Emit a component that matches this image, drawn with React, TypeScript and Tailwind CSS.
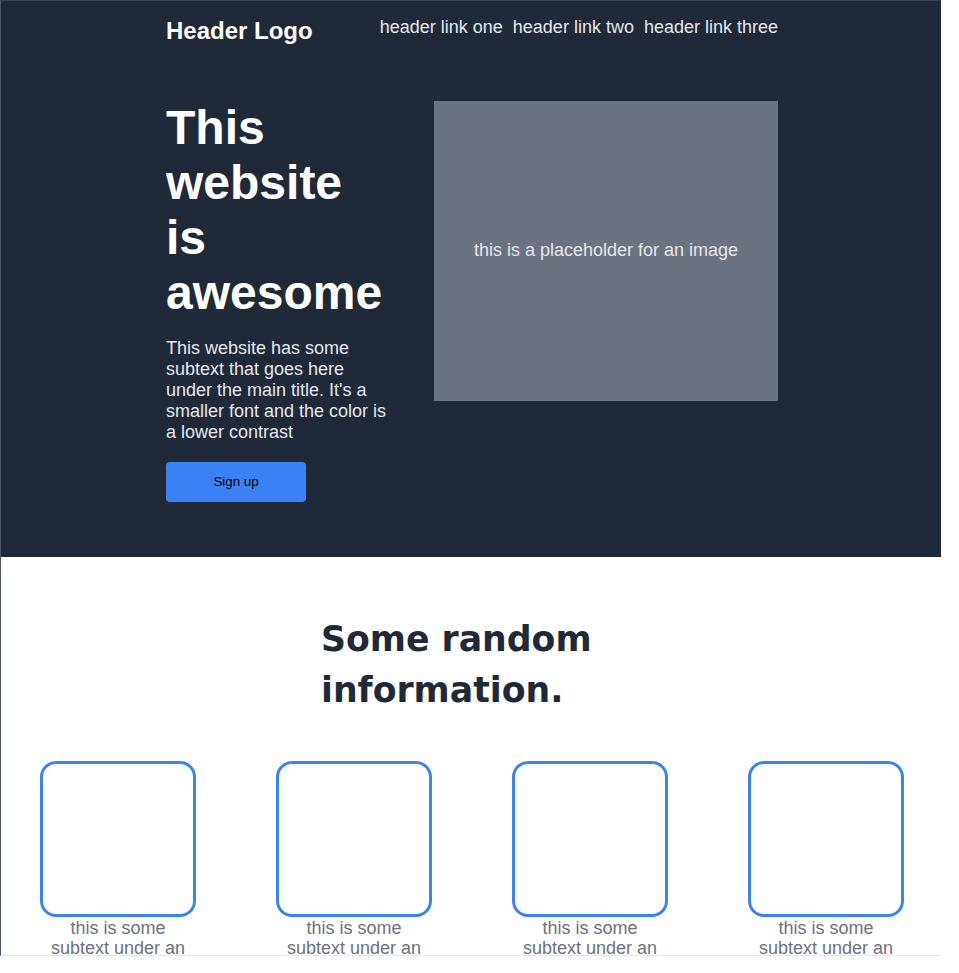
const cards = [1, 2, 3, 4];

const App = () => {
    return (
        <div className="min-h-screen bg-white" style={{ fontFamily: '"Liberation Sans", Arial, sans-serif' }}>
            <div className="w-[941px] h-[956px] overflow-hidden border-l border-t border-b border-l-[#4b5563] border-t-[#374151] border-b-[#e5e7eb] leading-[1.15]">
                {/* Hero */}
                <div className="bg-[#1f2937] pb-[55px]">
                    <div className="w-[612px] ml-[165px]">
                        <header className="flex items-start justify-between pt-4">
                            <div className="text-[24px] font-bold text-white">Header Logo</div>
                            <nav className="flex gap-[10px] text-[18px] text-[#e5e7eb]">
                                <a>header link one</a>
                                <a>header link two</a>
                                <a>header link three</a>
                            </nav>
                        </header>

                        <div className="flex items-start justify-between mt-[55px]">
                            <div className="w-[222px]">
                                <h1 className="text-[48px] font-bold text-white leading-[55px]">
                                    This website is awesome
                                </h1>
                                <p className="mt-[18px] text-[18px] leading-[21px] text-[#e5e7eb]">
                                    This website has some subtext that goes here under the main title. It's a smaller font and the color is a lower contrast
                                </p>
                                <button className="mt-[19px] w-[140px] h-[40px] rounded bg-[#3b82f6] text-[13.333px] text-black">
                                    Sign up
                                </button>
                            </div>
                            <div className="w-[344px] h-[300px] mt-px bg-[#6b7280] flex items-center justify-center text-[18px] text-[#e5e7eb]">
                                this is a placeholder for an image
                            </div>
                        </div>
                    </div>
                </div>

                {/* Information */}
                <div className="pt-[57px]">
                    <h2
                        className="w-[300px] mx-auto text-[34.7px] font-bold text-[#1f2937] leading-[51px]"
                        style={{ fontFamily: '"DejaVu Sans", sans-serif' }}>
                        Some random information.
                    </h2>
                    <div className="flex gap-[80px] pl-[39px] mt-[45px]">
                        {cards.map(card => (
                            <div key={card} className="w-[156px] flex flex-col items-center">
                                <div className="w-[156px] h-[156px] border-[3px] border-[#3b82f6] rounded-2xl" />
                                <p className="mt-px text-[18px] text-[#6b7280] text-center">
                                    this is some subtext under an illustration of an icon
                                </p>
                            </div>
                        ))}
                    </div>
                </div>
            </div>
        </div>
    );
};

export default App;
